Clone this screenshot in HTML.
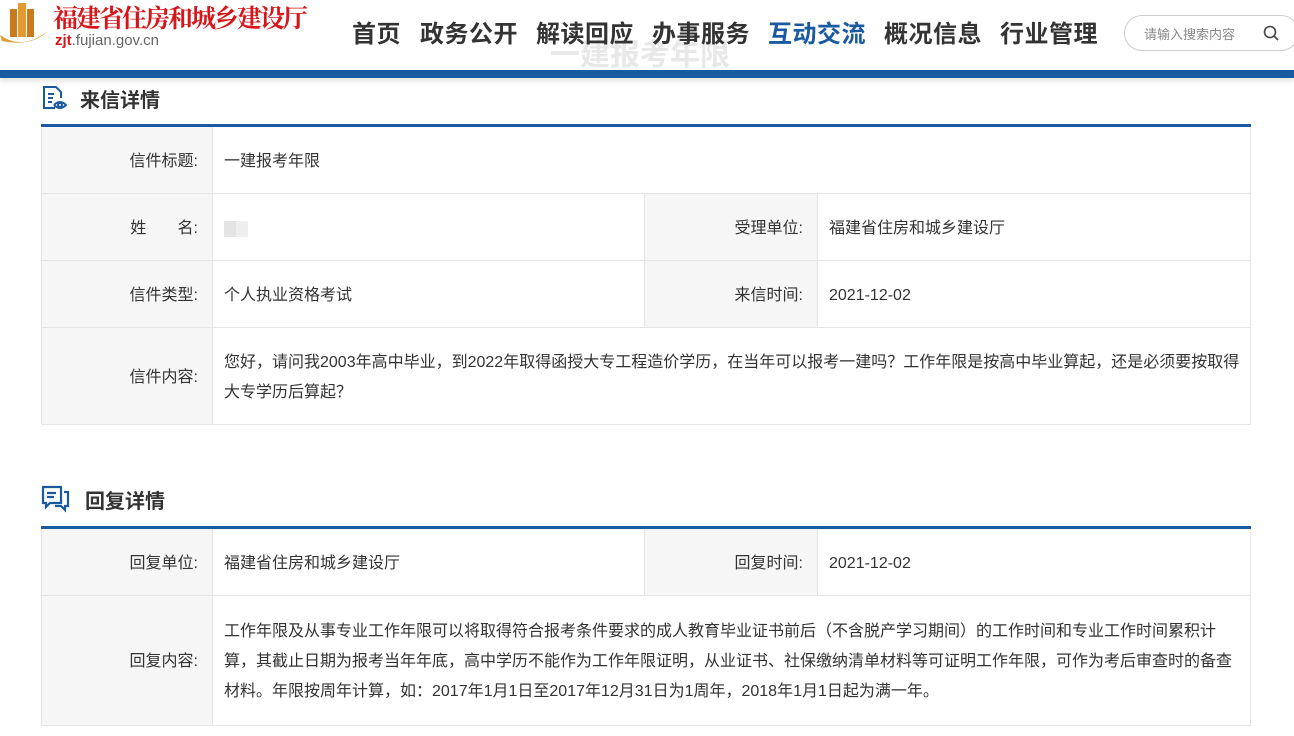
<!DOCTYPE html>
<html><head><meta charset="utf-8"><style>
*{margin:0;padding:0;box-sizing:border-box}
body{width:1294px;height:725px;overflow:hidden;background:#fff;font-family:"Liberation Sans","Noto Sans CJK SC",sans-serif;color:#333;position:relative}
.a{position:absolute}
.nav{top:14px;font-size:24px;font-weight:bold;color:#333;letter-spacing:0.5px}
.bar{top:70px;left:0;width:1294px;height:8px;background:#1a5aa0;box-shadow:0 3px 6px rgba(0,0,0,.12)}
.h{font-size:20px;font-weight:bold;color:#333}
.tb{left:41px;width:1210px;border-top:3px solid #1a5aa0}
.c{position:absolute;border-right:1px solid #e5e5e5;border-bottom:1px solid #e5e5e5;font-size:16px;display:flex;align-items:center;line-height:30px;padding-top:3px}
.l{background:#f6f6f6;justify-content:flex-end;padding-right:14px;border-left:1px solid #e5e5e5}
.v{padding-left:11px;padding-right:8px}
</style></head><body>
<div class="a" style="left:550px;top:30px;font-size:30px;font-weight:bold;color:#e8e8e8">一建报考年限</div>
<svg class="a" style="left:0;top:3px" width="50" height="45" viewBox="0 0 50 45">
<rect x="10" y="6" width="7" height="28" fill="#c97a1c"/><rect x="18" y="0" width="8" height="34" fill="#e39a30"/><rect x="27" y="6" width="7" height="28" fill="#c97a1c"/>
<path d="M0 32 Q22 48 48 28 Q32 44 2 38Z" fill="#e39a30"/></svg>
<div class="a" style="left:53px;top:2px;font-size:25px;font-weight:bold;color:#d7161b;font-family:'Noto Serif CJK SC',serif;letter-spacing:-2px;line-height:30px">福建省住房和城乡建设厅</div>
<div class="a" style="left:55px;top:32px;font-size:15px;color:#666;line-height:17px"><span style="color:#d7161b;font-weight:bold">zjt</span>.fujian.gov.cn</div>
<div class="a nav" style="left:352px">首页</div>
<div class="a nav" style="left:420px">政务公开</div>
<div class="a nav" style="left:536px">解读回应</div>
<div class="a nav" style="left:652px">办事服务</div>
<div class="a nav" style="left:768px;color:#1a5aa0">互动交流</div>
<div class="a nav" style="left:884px">概况信息</div>
<div class="a nav" style="left:1000px">行业管理</div>
<div class="a" style="left:1124px;top:15px;width:175px;height:36px;border:1px solid #ccc;border-radius:18px;font-size:13px;color:#888;padding:8px 0 0 19px">请输入搜索内容</div>
<svg class="a" style="left:1263px;top:25px" width="16" height="16" viewBox="0 0 16 16"><circle cx="7" cy="7" r="5.5" fill="none" stroke="#444" stroke-width="1.6"/><path d="M11 11l4 4" stroke="#444" stroke-width="1.6"/></svg>
<div class="a bar"></div>

<svg class="a" style="left:41px;top:85px" width="26" height="26" viewBox="0 0 26 26" fill="none" stroke="#1a5aa0" stroke-width="2"><path d="M14 23H3V2h12l5 5v6"/><path d="M7 9h6M7 13h5M7 17h4"/><circle cx="19" cy="20" r="2"/><path d="M13 20q6-6 12 0q-6 6-12 0"/></svg>
<div class="a h" style="left:80px;top:84px">来信详情</div>
<div class="a tb" style="top:124px;height:302px">
<div class="c l" style="left:0;top:0;width:172px;height:67px">信件标题:</div>
<div class="c v" style="left:172px;top:0;width:1038px;height:67px">一建报考年限</div>
<div class="c l" style="left:0;top:67px;width:172px;height:67px">姓&nbsp;&nbsp;&nbsp;&nbsp;&nbsp;&nbsp;&nbsp;名:</div>
<div class="c v" style="left:172px;top:67px;width:432px;height:67px"><span style="display:inline-block;width:24px;height:16px;background:linear-gradient(90deg,#e4e4e4 50%,#eee 50%)"></span></div>
<div class="c" style="left:604px;top:67px;width:173px;height:67px;background:#f6f6f6;justify-content:flex-end;padding-right:14px">受理单位:</div>
<div class="c v" style="left:777px;top:67px;width:433px;height:67px">福建省住房和城乡建设厅</div>
<div class="c l" style="left:0;top:134px;width:172px;height:67px">信件类型:</div>
<div class="c v" style="left:172px;top:134px;width:432px;height:67px">个人执业资格考试</div>
<div class="c" style="left:604px;top:134px;width:173px;height:67px;background:#f6f6f6;justify-content:flex-end;padding-right:14px">来信时间:</div>
<div class="c v" style="left:777px;top:134px;width:433px;height:67px">2021-12-02</div>
<div class="c l" style="left:0;top:201px;width:172px;height:97px">信件内容:</div>
<div class="c v" style="left:172px;top:201px;width:1038px;height:97px">您好，请问我2003年高中毕业，到2022年取得函授大专工程造价学历，在当年可以报考一建吗？工作年限是按高中毕业算起，还是必须要按取得大专学历后算起？</div>
</div>

<svg class="a" style="left:40px;top:485px" width="32" height="28" viewBox="0 0 32 28" fill="none" stroke="#1a5aa0" stroke-width="2.2"><path d="M3 2h18v16H10l-4 4v-4H3z"/><path d="M7 8h9M7 12h7"/><path d="M24 7h4v14h-3v4l-4-4h-6"/></svg>
<div class="a h" style="left:85px;top:485px">回复详情</div>
<div class="a tb" style="top:526px;height:210px">
<div class="c l" style="left:0;top:0;width:172px;height:67px">回复单位:</div>
<div class="c v" style="left:172px;top:0;width:432px;height:67px">福建省住房和城乡建设厅</div>
<div class="c" style="left:604px;top:0;width:173px;height:67px;background:#f6f6f6;justify-content:flex-end;padding-right:14px">回复时间:</div>
<div class="c v" style="left:777px;top:0;width:433px;height:67px">2021-12-02</div>
<div class="c l" style="left:0;top:67px;width:172px;height:130px">回复内容:</div>
<div class="c v" style="left:172px;top:67px;width:1038px;height:130px">工作年限及从事专业工作年限可以将取得符合报考条件要求的成人教育毕业证书前后（不含脱产学习期间）的工作时间和专业工作时间累积计算，其截止日期为报考当年年底，高中学历不能作为工作年限证明，从业证书、社保缴纳清单材料等可证明工作年限，可作为考后审查时的备查材料。年限按周年计算，如：2017年1月1日至2017年12月31日为1周年，2018年1月1日起为满一年。</div>
</div>
</body></html>
